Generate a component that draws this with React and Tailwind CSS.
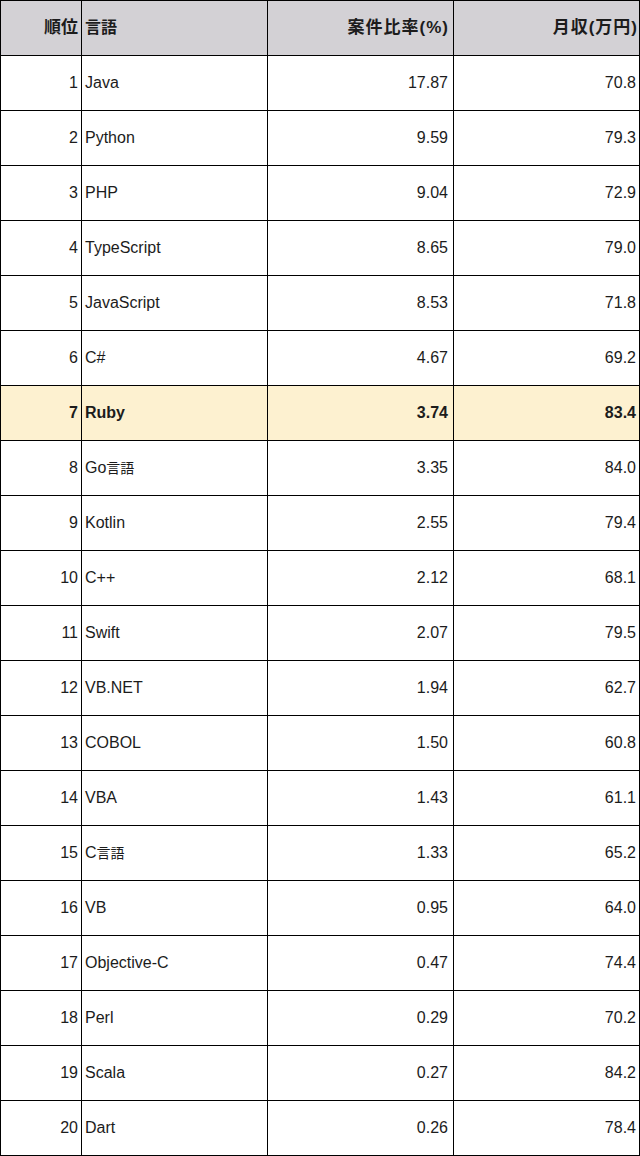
import React from "react";

const rows = [
  [1, "Java", "17.87", "70.8"],
  [2, "Python", "9.59", "79.3"],
  [3, "PHP", "9.04", "72.9"],
  [4, "TypeScript", "8.65", "79.0"],
  [5, "JavaScript", "8.53", "71.8"],
  [6, "C#", "4.67", "69.2"],
  [7, "Ruby", "3.74", "83.4"],
  [8, "Go言語", "3.35", "84.0"],
  [9, "Kotlin", "2.55", "79.4"],
  [10, "C++", "2.12", "68.1"],
  [11, "Swift", "2.07", "79.5"],
  [12, "VB.NET", "1.94", "62.7"],
  [13, "COBOL", "1.50", "60.8"],
  [14, "VBA", "1.43", "61.1"],
  [15, "C言語", "1.33", "65.2"],
  [16, "VB", "0.95", "64.0"],
  [17, "Objective-C", "0.47", "74.4"],
  [18, "Perl", "0.29", "70.2"],
  [19, "Scala", "0.27", "84.2"],
  [20, "Dart", "0.26", "78.4"],
];

const cell = "h-[54px] box-content border-r border-b border-black flex items-center pl-[3px]";

function Lang({ name }) {
  const i = name.indexOf("言語");
  if (i < 0) return <>{name}</>;
  return (
    <>
      {name.slice(0, i)}
      <span className="text-[14px]">言語</span>
    </>
  );
}

export default function App() {
  return (
    <div
      className="w-[640px] bg-white text-[16px] text-[#1c1c1c]"
      style={{ fontFamily: '"Liberation Sans", Arial, "Noto Sans CJK JP", sans-serif' }}
    >
      <div className="grid grid-cols-[81px_186px_186px_186px] border-l border-t border-black">
        <div className={`${cell} justify-end font-bold bg-[#d3d1d5] text-[17px] pr-[3px]`}>順位</div>
        <div className={`${cell} justify-start font-bold bg-[#d3d1d5] text-[16px] pr-[3px]`}>言語</div>
        <div className={`${cell} justify-end font-bold bg-[#d3d1d5] text-[17px] tracking-[1px] pr-[4px]`}>案件比率(%)</div>
        <div className={`${cell} justify-end font-bold bg-[#d3d1d5] text-[17px] tracking-[1px] pr-[1px]`}>月収(万円)</div>
        {rows.map(([rank, lang, ratio, pay]) => {
          const hl = rank === 7;
          const extra = hl ? "bg-[#fdf1d0] font-bold" : "bg-white";
          return (
            <React.Fragment key={rank}>
              <div className={`${cell} justify-end pr-[3px] ${extra}`}>{rank}</div>
              <div className={`${cell} justify-start pr-[3px] ${extra}`}><Lang name={lang} /></div>
              <div className={`${cell} justify-end pr-[5px] ${extra}`}>{ratio}</div>
              <div className={`${cell} justify-end pr-[3px] ${extra}`}>{pay}</div>
            </React.Fragment>
          );
        })}
      </div>
    </div>
  );
}
